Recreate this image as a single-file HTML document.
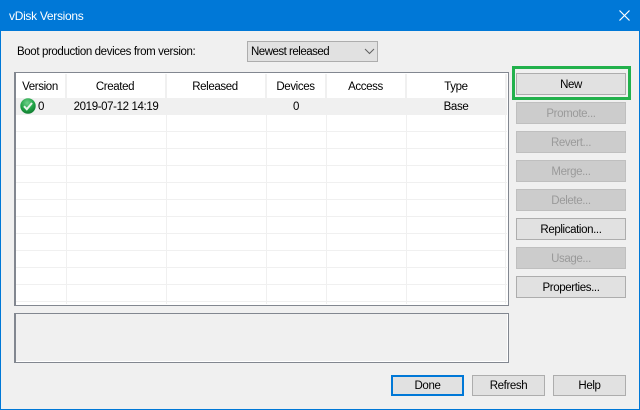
<!DOCTYPE html>
<html><head><meta charset="utf-8"><style>
html,body{margin:0;padding:0}
body{width:640px;height:410px;overflow:hidden;position:relative;background:#f0f0f0;font:11.500px "Liberation Sans",sans-serif;letter-spacing:-.38px;color:#000}
div,span{position:absolute;box-sizing:border-box;white-space:nowrap}
.b{left:516px;width:110px;height:22px;background:#e1e1e1;border:1px solid #adadad;text-align:center;line-height:22px}
.d{background:#cccccc;border-color:#bfbfbf;color:#9a9a9a}
.v{width:1px;background:#f0f0f0;top:98px;height:206px}
.hv{width:2px;background:#f0f0f0;top:74px;height:24px}
.h{height:1px;background:#f0f0f0;left:16px;width:491px}
.t{text-align:center;top:80px;line-height:14px}
.r{text-align:center;top:100px;line-height:14px}
.c{top:375px;width:73px;height:21px;background:#e1e1e1;border:1px solid #adadad;text-align:center;line-height:21px}
</style></head><body>
<div style="left:0;top:0;width:640px;height:410px;border:1px solid #0078d7"></div>
<div style="left:0;top:0;width:640px;height:31px;background:#0078d7"></div>
<div style="left:9px;top:8px;color:#fff;line-height:16px;font-size:12px;letter-spacing:-.3px">vDisk Versions</div>
<svg style="position:absolute;left:619px;top:10px" width="11" height="11" viewBox="0 0 11 11"><path d="M.5.5l10 10M10.500.5l-10 10" stroke="#fff" stroke-width="1.200" fill="none"/></svg>

<div style="left:17px;top:45px;line-height:14px">Boot production devices from version:</div>
<div style="left:247px;top:41px;width:131px;height:21px;background:#e1e1e1;border:1px solid #adadad"></div>
<div style="left:251px;top:45px;line-height:14px;letter-spacing:-.5px">Newest released</div>
<svg style="position:absolute;left:364px;top:48px" width="11" height="7" viewBox="0 0 11 7"><path d="M1 1l4.500 4.500L10 1" stroke="#606060" stroke-width="1" fill="none"/></svg>

<div style="left:14px;top:72px;width:495px;height:234px;background:#fff;border:1px solid #828790"></div>
<div style="left:14px;top:72px;width:2px;height:234px;background:#828790"></div>
<div style="left:16px;top:98px;width:491px;height:17px;background:#f0f0f0"></div>
<div class="hv" style="left:65px"></div><div class="hv" style="left:165px"></div><div class="hv" style="left:265px"></div><div class="hv" style="left:325px"></div><div class="hv" style="left:405px"></div><div class="hv" style="left:505px"></div>
<div class="v" style="left:66px"></div><div class="v" style="left:166px"></div><div class="v" style="left:266px"></div><div class="v" style="left:326px"></div><div class="v" style="left:406px"></div><div class="v" style="left:505px"></div>
<div class="h" style="top:131px"></div><div class="h" style="top:148px"></div><div class="h" style="top:165px"></div><div class="h" style="top:182px"></div><div class="h" style="top:199px"></div><div class="h" style="top:216px"></div><div class="h" style="top:233px"></div><div class="h" style="top:250px"></div><div class="h" style="top:267px"></div><div class="h" style="top:284px"></div><div class="h" style="top:301px"></div>

<div class="t" style="left:16px;width:48px">Version</div>
<div class="t" style="left:65px;width:100px">Created</div>
<div class="t" style="left:165px;width:100px">Released</div>
<div class="t" style="left:266px;width:59px">Devices</div>
<div class="t" style="left:326px;width:79px">Access</div>
<div class="t" style="left:406px;width:100px">Type</div>

<svg style="position:absolute;left:20px;top:98px" width="16" height="16" viewBox="0 0 16 16"><defs><radialGradient id="g" cx=".45" cy=".3" r=".8"><stop offset="0" stop-color="#6fd08a"/><stop offset=".55" stop-color="#1fa244"/><stop offset="1" stop-color="#0c6d2a"/></radialGradient></defs><circle cx="8" cy="8" r="7.700" fill="url(#g)"/><path d="M4 8.200l2.800 3L12 5" stroke="#e9f5ec" stroke-width="2" fill="none"/></svg>
<div style="left:38px;top:100px;line-height:14px">0</div>
<div class="r" style="left:66px;width:100px">2019-07-12 14:19</div>
<div class="r" style="left:266px;width:60px">0</div>
<div class="r" style="left:406px;width:100px">Base</div>

<div style="left:14px;top:313px;width:495px;height:50px;background:#828790"></div>
<div style="left:16px;top:314px;width:492px;height:48px;background:#fff"></div>
<div style="left:16px;top:314px;width:491px;height:47px;background:#f0f0f0"></div>

<div style="left:512px;top:66px;width:119px;height:34px;border:3px solid #22b14c"></div>
<div class="b" style="top:73px">New</div>
<div class="b d" style="top:102px">Promote...</div>
<div class="b d" style="top:131px">Revert...</div>
<div class="b d" style="top:160px">Merge...</div>
<div class="b d" style="top:189px">Delete...</div>
<div class="b" style="top:218px">Replication...</div>
<div class="b d" style="top:247px">Usage...</div>
<div class="b" style="top:276px">Properties...</div>

<div class="c" style="left:391px;border:2px solid #0078d7;line-height:19px">Done</div>
<div class="c" style="left:472px">Refresh</div>
<div class="c" style="left:553px">Help</div>
</body></html>
